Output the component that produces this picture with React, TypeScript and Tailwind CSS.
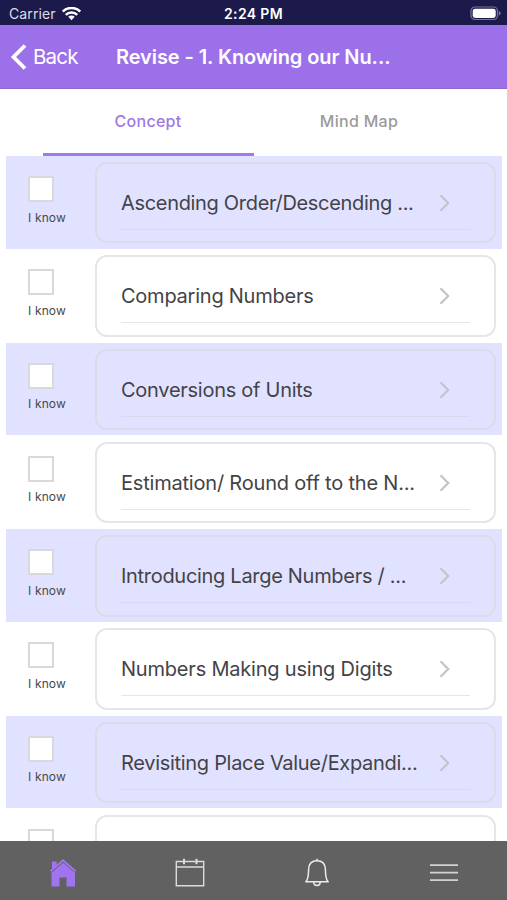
import React from "react";

type Item = { title: string; tracking: string };

const items: Item[] = [
  { title: "Ascending Order/Descending ...", tracking: "tracking-[-0.32px]" },
  { title: "Comparing Numbers", tracking: "tracking-[-0.24px]" },
  { title: "Conversions of Units", tracking: "tracking-[-0.27px]" },
  { title: "Estimation/ Round off to the N...", tracking: "tracking-[-0.2px]" },
  { title: "Introducing Large Numbers / ...", tracking: "tracking-[-0.3px]" },
  { title: "Numbers Making using Digits", tracking: "tracking-[-0.2px]" },
  { title: "Revisiting Place Value/Expandi...", tracking: "tracking-[-0.3px]" },
  { title: "", tracking: "" },
];

function StatusBar() {
  return (
    <div className="grid h-[25px] shrink-0 grid-cols-3 items-center bg-[#1c1a4b] pt-[2px] text-white">
      <div className="flex items-center gap-[6px] pl-[9px]">
        <span className="text-[14px] leading-[20px] tracking-[0.1px] text-[#dddde8]">Carrier</span>
        <svg width="19" height="14" viewBox="0 0 19 14" fill="none" stroke="#fff" strokeWidth="2.5">
          <path d="M.8 4.5C5.5-.2 13.5-.2 18.2 4.5" />
          <path d="M3.8 7.8c3-3 8.4-3 11.4 0" />
          <path d="M6.3 9.8a4.4 4.4 0 0 1 6.4 0L9.5 13.2z" fill="#fff" stroke="none" />
        </svg>
      </div>
      <span className="text-center text-[14px] leading-[20px] font-semibold tracking-[0.35px]">2:24 PM</span>
      <div className="flex justify-end pr-[6px]">
        <svg width="31" height="15" viewBox="0 0 31 15">
          <rect x="1" y="1" width="26.5" height="12.5" rx="4" fill="none" stroke="#77759a" strokeWidth="1.2" />
          <rect x="2.7" y="2.7" width="23" height="9.2" rx="2.4" fill="#fff" />
          <path d="M28.8 5v4.6c1.5-.5 1.9-1.3 1.9-2.3s-.4-1.8-1.9-2.3z" fill="#77759a" />
        </svg>
      </div>
    </div>
  );
}

function Row({ item, shaded }: { item: Item; shaded: boolean }) {
  return (
    <div className="h-[93.3px] shrink-0">
      <div className={`flex h-[92.6px] pt-[6px] pr-[6px] pl-[22px] ${shaded ? "bg-[#e1e2ff]" : "bg-white"}`}>
        <div className="w-[67px] shrink-0 pt-[14px]">
          <div className="size-[26px] border-2 border-[#d9d9dc] bg-white" />
          {item.title && (
            <div className="mt-[7.5px] text-[12px] leading-[16px] tracking-[0.15px] text-[#48484c]">I know</div>
          )}
        </div>
        <div className={`h-[81.4px] flex-1 rounded-[12px] border-2 pr-[24px] pl-[24px] ${shaded ? "border-[#dadce8]" : "border-[#e5e6e8]"}`}>
          <div className={`flex h-[66px] items-center border-b pt-[13px] ${shaded ? "border-[#d8d9ee]" : "border-[#e6e6e8]"}`}>
            <span className={`flex-1 text-[20px] leading-[28px] whitespace-nowrap text-[#434347] ${item.tracking}`}>{item.title}</span>
            <svg className="mr-[19px]" width="12" height="18" viewBox="0 0 12 18" fill="none" stroke="#c4c5cb" strokeWidth="2.3">
              <path d="M1.5 1.3 9.2 9 1.5 16.7" />
            </svg>
          </div>
        </div>
      </div>
    </div>
  );
}

export default function App() {
  return (
    <div className="flex h-[900px] w-[507px] flex-col overflow-hidden bg-white font-[Inter,'Liberation_Sans',sans-serif]">
      <StatusBar />
      <header className="flex h-[64px] shrink-0 items-center border-b border-[#8f69cf] bg-[#9c70e8] pl-[10px] text-white">
        <svg width="18" height="28" viewBox="0 0 18 28" fill="none" stroke="#fff" strokeWidth="3.8">
          <path d="M15 2.5 3.5 14 15 25.5" />
        </svg>
        <span className="ml-[5px] w-[83px] text-[20.5px] leading-[28px] tracking-[-0.8px]">Back</span>
        <h1 className="text-[20px] leading-[28px] font-semibold tracking-[-0.08px] whitespace-nowrap">Revise - 1. Knowing our Nu...</h1>
      </header>
      <nav className="flex h-[67px] shrink-0 pl-[43px] text-center text-[16px] leading-[20px] font-medium tracking-[0.3px]">
        <div className="w-[211px] border-b-[3px] border-[#a079ea] pt-[22px] pr-px text-[#9f78e6]">Concept</div>
        <div className="w-[211px] pt-[22px] pr-px text-[#9b9b9b]">Mind Map</div>
      </nav>
      <main className="flex min-h-0 flex-1 flex-col overflow-hidden pr-[5px] pl-[6px]">
        {items.map((item, i) => (
          <Row key={i} item={item} shaded={i % 2 === 0} />
        ))}
      </main>
      <footer className="grid h-[59px] shrink-0 grid-cols-4 place-items-center bg-[#616161] pt-[4px]">
        <svg width="28" height="30" viewBox="0 0 28 30" fill="#9f74ee">
          <path d="M3 3.5h4.7v4L3 12z" />
          <path d="M14 1 27.2 12.5l-1.3 1.4L14 3.8 2.1 13.9.8 12.5z" />
          <path d="M14 4.8 26 14.8v13.7h-8.5v-9h-7v9H2.5V14.8z" />
        </svg>
        <svg width="30" height="30" viewBox="0 0 30 30" fill="none" stroke="#dcdcdc" strokeWidth="1.4">
          <path d="M1.3 3.5h27.4v24.2H1.3zM1.3 9h27.4" />
          <path d="M9 .8v5.4M21.5.8v5.4" strokeWidth="2" />
        </svg>
        <svg width="28" height="30" viewBox="0 0 28 30" fill="none" stroke="#ececec" strokeWidth="1.5" strokeLinejoin="round">
          <path d="M2.8 23.7C5.6 21 5.4 17.5 5.6 11.2 5.8 6 9 2.8 14 2.8s8.2 3.2 8.4 8.4c.2 6.3 0 9.8 2.8 12.5z" />
          <path d="M10.8 24c0 4.7 6.4 4.7 6.4 0M14 .8v2" />
        </svg>
        <svg width="28" height="30" viewBox="0 0 28 30" stroke="#d2d2d2" strokeWidth="1.7">
          <path d="M0 7.2h28M0 14.7h28M0 22.2h28" />
        </svg>
      </footer>
    </div>
  );
}
